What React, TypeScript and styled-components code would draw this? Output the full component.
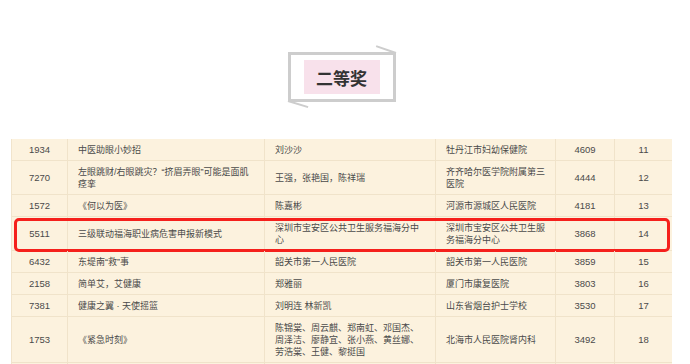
import React from "react";
import styled, { createGlobalStyle } from "styled-components";

const GlobalStyle = createGlobalStyle`
  html, body {
    margin: 0;
    padding: 0;
    background: #ffffff;
  }
  body {
    font-family: "Liberation Sans", "Noto Sans CJK SC", sans-serif;
  }
`;

const Page = styled.div`
  width: 690px;
  height: 364px;
  overflow: hidden;
`;

const Content = styled.div`
  width: 661px;
  margin-left: 11px;
  padding-top: 52px;
`;

const TitleWrap = styled.div`
  display: flex;
  justify-content: center;
  margin-bottom: 37px;
`;

const TitleFrame = styled.div`
  position: relative;
  border: 3px solid #cdcdcd;
  padding: 5px 13px;

  /* 오른쪽 위 꺾인 선 */
  &::before {
    content: "";
    position: absolute;
    top: -3px;
    right: -3px;
    width: 21px;
    height: 2px;
    background: #cdcdcd;
    transform-origin: right center;
    transform: rotate(19deg);
  }

  /* 왼쪽 아래 꺾인 선 */
  &::after {
    content: "";
    position: absolute;
    bottom: -3px;
    left: -3px;
    width: 21px;
    height: 2px;
    background: #cdcdcd;
    transform-origin: left center;
    transform: rotate(17deg);
  }
`;

const TitleBadge = styled.div`
  width: 76px;
  height: 34px;
  background: #f8e1eb;
  display: flex;
  align-items: center;
  justify-content: center;
  font-family: "Noto Sans CJK SC", sans-serif;
  font-size: 17px;
  font-weight: 700;
  color: #333333;
`;

const Table = styled.div`
  background: #fcf2de;
  border-left: 1px solid #f1e4cc;
`;

const Row = styled.div<{ $highlight?: boolean }>`
  position: relative;
  display: grid;
  grid-template-columns: 56px 197px 171px 120px 59px 57px;
  border-bottom: 1px solid #f0e3ca;
  min-height: 21px;

  ${(p) =>
    p.$highlight &&
    `
    &::after {
      content: "";
      position: absolute;
      left: 2px;
      right: 2px;
      top: 1px;
      bottom: -2px;
      border: 3px solid #f5201c;
      border-radius: 5px;
      pointer-events: none;
    }
  `}
`;

const Cell = styled.div<{ $center?: boolean }>`
  display: flex;
  align-items: center;
  justify-content: ${(p) => (p.$center ? "center" : "flex-start")};
  text-align: ${(p) => (p.$center ? "center" : "left")};
  padding: 4.5px 10px;
  border-right: 1px solid #f0e3ca;
  font-size: 9px;
  line-height: 12px;
  color: #4a4a4a;
  box-sizing: border-box;
  min-width: 0;
  word-break: break-all;

  &:last-child {
    border-right: none;
  }
`;

const NumText = styled.span`
  font-size: 9.5px;
`;

interface Entry {
  id: string;
  title: string;
  author: string;
  unit: string;
  votes: string;
  rank: string;
  highlight?: boolean;
}

const entries: Entry[] = [
  { id: "1934", title: "中医助眼小妙招", author: "刘沙沙", unit: "牡丹江市妇幼保健院", votes: "4609", rank: "11" },
  {
    id: "7270",
    title: "左眼跳财/右眼跳灾？“挤眉弄眼”可能是面肌痉挛",
    author: "王强，张艳国，陈祥瑞",
    unit: "齐齐哈尔医学院附属第三医院",
    votes: "4444",
    rank: "12",
  },
  { id: "1572", title: "《何以为医》", author: "陈嘉彬", unit: "河源市源城区人民医院", votes: "4181", rank: "13" },
  {
    id: "5511",
    title: "三级联动福海职业病危害申报新模式",
    author: "深圳市宝安区公共卫生服务福海分中心",
    unit: "深圳市宝安区公共卫生服务福海分中心",
    votes: "3868",
    rank: "14",
    highlight: true,
  },
  { id: "6432", title: "东堤南“救”事", author: "韶关市第一人民医院", unit: "韶关市第一人民医院", votes: "3859", rank: "15" },
  { id: "2158", title: "简单艾，艾健康", author: "郑雅丽", unit: "厦门市康复医院", votes: "3803", rank: "16" },
  { id: "7381", title: "健康之翼 · 天使摇篮", author: "刘明连 林新凯", unit: "山东省烟台护士学校", votes: "3530", rank: "17" },
  {
    id: "1753",
    title: "《紧急时刻》",
    author: "陈锦棠、周云麒、郑南虹、邓国杰、周泽洁、廖静宜、张小燕、黄丝娜、劳浩棠、王健、黎挺国",
    unit: "北海市人民医院肾内科",
    votes: "3492",
    rank: "18",
  },
  { id: "", title: "", author: "", unit: "", votes: "", rank: "" },
];

export default function App() {
  return (
    <Page>
      <GlobalStyle />
      <Content>
        <TitleWrap>
          <TitleFrame>
            <TitleBadge>二等奖</TitleBadge>
          </TitleFrame>
        </TitleWrap>

        <Table>
          {entries.map((e, i) => (
            <Row key={i} $highlight={e.highlight}>
              <Cell $center>
                <NumText>{e.id}</NumText>
              </Cell>
              <Cell>{e.title}</Cell>
              <Cell>{e.author}</Cell>
              <Cell>{e.unit}</Cell>
              <Cell $center>
                <NumText>{e.votes}</NumText>
              </Cell>
              <Cell $center>
                <NumText>{e.rank}</NumText>
              </Cell>
            </Row>
          ))}
        </Table>
      </Content>
    </Page>
  );
}
